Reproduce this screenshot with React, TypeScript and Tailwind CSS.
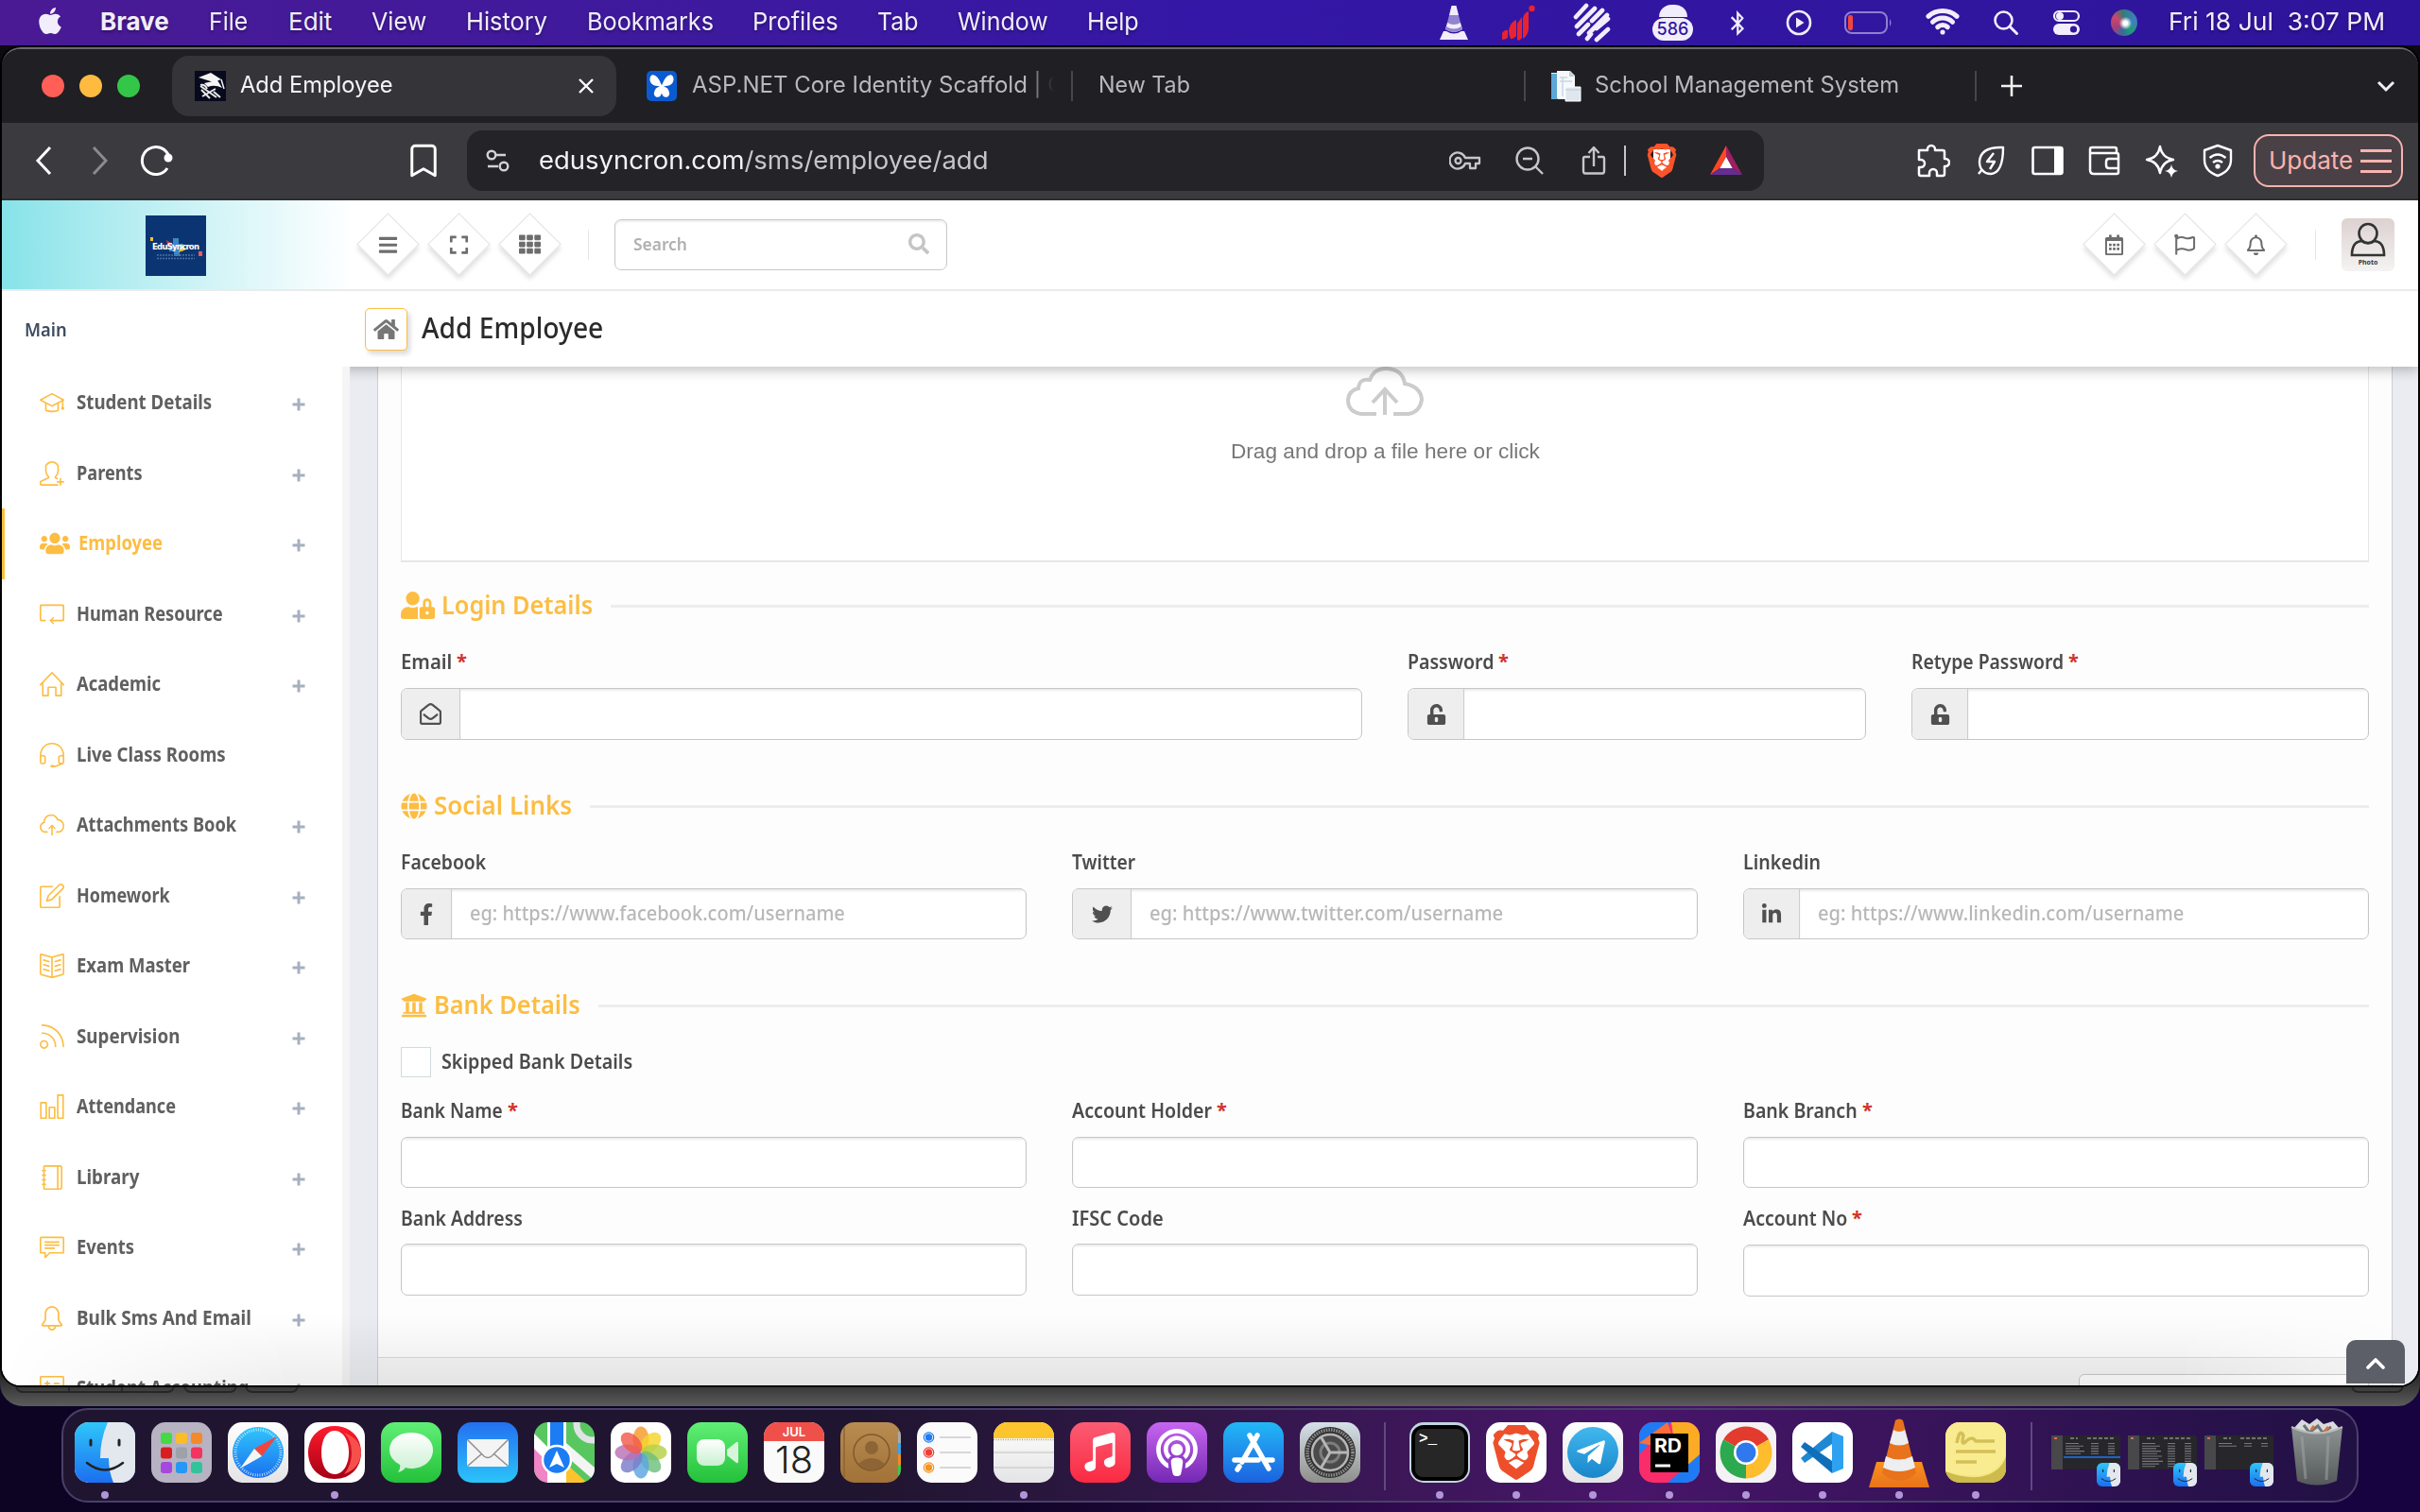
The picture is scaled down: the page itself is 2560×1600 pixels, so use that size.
import React, { useLayoutEffect, useRef, useState, ReactNode } from "react";
import {
  FaApple, FaBars, FaBluetoothB, FaExpand, FaFacebookF, FaGlobe, FaHome, FaLinkedinIn, FaPodcast,
  FaRegBell, FaRegCalendarAlt, FaRegEnvelopeOpen, FaRegFlag, FaSearch, FaTelegramPlane, FaTh,
  FaTwitter, FaUniversity, FaUnlockAlt, FaUserLock, FaUsers,
} from "react-icons/fa";
import {
  SlGraduation, SlUserFollow, SlLoop, SlHome, SlEarphonesAlt, SlCloudUpload, SlNote, SlBookOpen,
  SlFeed, SlChart, SlNotebook, SlSpeech, SlBell, SlCalculator,
} from "react-icons/sl";
import { SiBrave } from "react-icons/si";
import { IoMusicalNotes } from "react-icons/io5";
import { Bookmark, Wifi } from "lucide-react";

/* One line of text, condensed or widened to a given width. */
function Fit({ w, children, className = "" }: { w: number; children: ReactNode; className?: string }) {
  const ref = useRef<HTMLSpanElement>(null);
  const [k, setK] = useState(1);
  useLayoutEffect(() => {
    if (ref.current) setK(w / ref.current.offsetWidth);
  }, [w]);
  return (
    <span className={"block shrink-0 " + className} style={{ width: w }}>
      <span ref={ref} className="inline-block origin-left whitespace-pre" style={{ transform: `scaleX(${k})` }}>
        {children}
      </span>
    </span>
  );
}

/* ---------- macOS menu bar ---------- */

function MenuBar() {
  return (
    <div className="flex h-[48px] shrink-0 items-center bg-linear-to-r from-[#4a1a94] via-[#3417a6] to-[#2e149a] font-['Inter'] text-[26px] leading-[46px] text-[#f1edfb] [text-shadow:0_2px_3px_rgba(0,0,0,.35)]">
      <FaApple className="ml-[37px] h-[32px] w-[32px] -translate-y-[2px]" />
      <Fit w={73} className="ml-[37px] -translate-y-px font-bold">Brave</Fit>
      <Fit w={41} className="ml-[42px] -translate-y-px">File</Fit>
      <Fit w={46} className="ml-[43px] -translate-y-px">Edit</Fit>
      <Fit w={58} className="ml-[42px] -translate-y-px">View</Fit>
      <Fit w={86} className="ml-[42px] -translate-y-px">History</Fit>
      <Fit w={134} className="ml-[42px] -translate-y-px">Bookmarks</Fit>
      <Fit w={91} className="ml-[41px] -translate-y-px">Profiles</Fit>
      <Fit w={43} className="ml-[41px] -translate-y-px">Tab</Fit>
      <Fit w={96} className="ml-[42px] -translate-y-px">Window</Fit>
      <Fit w={55} className="ml-[41px] -translate-y-px">Help</Fit>
      <svg className="ml-auto" width="34" height="38" viewBox="0 0 34 38">
        <path d="M14.5 1h5l2.5 10h-10z M10 19h14l2 7q-9 6-18 0z M6 28h3q8 5 16 0h3l4 9H2z" fill="#f1edfb" />
        <path d="M12 11h10l2 8q-7 4-14 0z M8 26l1-3q8 5 16 0l1 3q-9 6-18 0z" fill="#9484cf" />
      </svg>
      <svg className="ml-[33px]" width="36" height="38" viewBox="0 0 36 38">
        <g fill="#e8232f">
          <path d="M1 30q3-4 6-3v8q-3 2-6 2zM8 27q2-9 8-11v17q-3 4-6 3-2-4-2-9zM17 20l5-7v22q-3 4-5 2zM23 15q1-7 6-8v19q-1 7-6 10z" />
          <circle cx="32.500" cy="4" r="3.200" />
        </g>
      </svg>
      <svg className="ml-[39px]" width="42" height="42" viewBox="0 0 42 42">
        <g stroke="#f1edfb" strokeWidth="4.600" strokeLinecap="round">
          <path d="M4 15L15 3M5 25L24 6M7 33L17 23M21 19L32 8M18 32L37 13M16 38L20 33M26 27L38 17M26 39L38 28" />
        </g>
      </svg>
      <span className="ml-[43px] flex h-[38px] w-[43px] shrink-0 flex-col items-center">
        <span className="h-[13px] w-[30px] rounded-t-full bg-[#f1edfb]" />
        <span className="mt-px flex h-[24px] w-[43px] items-center justify-center rounded-full bg-[#f1edfb] text-[18px] font-medium leading-none text-[#33169f] [text-shadow:none]">586</span>
      </span>
      <FaBluetoothB className="ml-[37px] h-[27px] w-[20px]" />
      <svg className="ml-[41px]" width="28" height="28" viewBox="0 0 28 28">
        <circle cx="14" cy="14" r="12" fill="none" stroke="#f1edfb" strokeWidth="2.6" />
        <path d="M11 8.5v11l8.5-5.5z" fill="#f1edfb" />
      </svg>
      <svg className="ml-[33px]" width="54" height="26" viewBox="0 0 54 26">
        <rect x="2" y="2" width="44" height="22" rx="7" fill="none" stroke="#8f7fd0" strokeWidth="2" />
        <rect x="5" y="5" width="5" height="16" rx="2" fill="#f2453d" />
        <path d="M49 9q3 4 0 8z" fill="#8f7fd0" />
      </svg>
      <Wifi className="ml-[33px] h-[36px] w-[36px] -translate-y-[2px]" strokeWidth={3.4} />
      <svg className="ml-[35px]" width="28" height="28" viewBox="0 0 28 28">
        <circle cx="11.5" cy="11.5" r="9" fill="none" stroke="#f1edfb" strokeWidth="2.6" />
        <path d="M18 18l7.5 7.5" stroke="#f1edfb" strokeWidth="3" strokeLinecap="round" />
      </svg>
      <svg className="ml-[35px]" width="30" height="28" viewBox="0 0 30 28">
        <rect x="2" y="2" width="26" height="10" rx="5" fill="none" stroke="#f1edfb" strokeWidth="2.2" />
        <circle cx="8" cy="7" r="4" fill="#f1edfb" />
        <rect x="1" y="15" width="28" height="12" rx="6" fill="#f1edfb" />
        <circle cx="22.500" cy="21" r="3.6" fill="#30169e" />
      </svg>
      <span className="ml-[32px] h-[28px] w-[28px] shrink-0 rounded-full bg-[radial-gradient(circle_at_55%_52%,#fff_0_10%,#ffffff00_32%),conic-gradient(#2f7f86,#3f7fc0_80deg,#1f9c74_140deg,#3a6a9a_190deg,#a2407a_240deg,#c8476c_300deg,#2f7f6b)]" />
      <Fit w={229} className="ml-[33px] mr-[37px] -translate-y-px">Fri 18 Jul  3:07 PM</Fit>
    </div>
  );
}

/* ---------- browser chrome ---------- */

function TabStrip() {
  return (
    <div className="flex h-[78px] shrink-0 items-center bg-[#201f24] font-['Inter'] text-[24px] leading-[32px] text-[#b9b9bc]">
      <span className="ml-[42px] h-[24px] w-[24px] rounded-full bg-[#ff5f57]" />
      <span className="ml-[16px] h-[24px] w-[24px] rounded-full bg-[#febb40]" />
      <span className="ml-[16px] h-[24px] w-[24px] rounded-full bg-[#34c648]" />
      <div className="ml-[34px] flex h-[64px] w-[470px] shrink-0 items-center rounded-[18px] bg-[#353439] text-[#f5f5f5]">
        <svg className="ml-[24px]" width="33" height="32" viewBox="0 0 33 32">
          <rect width="33" height="32" fill="#070a1c" />
          <path d="M4 7l13-5 11 7-8 3zM10 13l14-3 5 8q-8-4-15-1z" fill="#f4f4f4" />
          <path d="M28 9l3 10" stroke="#f4f4f4" strokeWidth="1.500" />
          <path d="M6 16l17 12M8 27l14-8M7 20l9 9M20 22l7 6M6 15q5-1 7 4" stroke="#e8e8e8" strokeWidth="2" fill="none" />
        </svg>
        <Fit w={162} className="ml-[15px] -translate-y-[1px]">Add Employee</Fit>
        <svg className="ml-auto mr-[24px]" width="16" height="16" viewBox="0 0 16 16">
          <path d="M1 1l14 14M15 1L1 15" stroke="#fff" strokeWidth="2.4" />
        </svg>
      </div>
      <svg className="ml-[32px] shrink-0" width="32" height="32" viewBox="0 0 32 32">
        <rect width="32" height="32" rx="5" fill="#0b5bd0" />
        <path d="M15 15Q11 4 6 5q-3 2-1 7 2 4 10 3zM17 15Q21 4 26 5q3 2 1 7-2 4-10 3zM15.500 16l-5 3q-4 6 0 8 5 1 5.500-8zM16.500 16l5 3q4 6 0 8-5 1-5.500-8z" fill="#fff" stroke="#fff" strokeWidth="1.500" />
      </svg>
      <div className="ml-[16px] w-[383px] shrink-0 overflow-hidden [mask-image:linear-gradient(to_right,#000_92%,transparent_100%)]">
        <Fit w={394} className="-translate-y-[1px]">ASP.NET Core Identity Scaffold | C</Fit>
      </div>
      <span className="ml-[18px] h-[32px] w-[2px] bg-[#47464b]" />
      <Fit w={97} className="ml-[27px] -translate-y-[1px]">New Tab</Fit>
      <span className="ml-[353px] h-[32px] w-[2px] bg-[#47464b]" />
      <svg className="ml-[25px] shrink-0" width="34" height="34" viewBox="0 0 34 34">
        <path d="M2 3h22v28H2z" fill="#e9f2f8" />
        <path d="M2 4h7v27H2z" fill="#5ba7d6" />
        <path d="M8 1h14l5 5v24H8z" fill="#f6f8fa" />
        <path d="M21 1l6 6h-6z" fill="#c3ced8" />
        <path d="M11 8h8M11 12h13M14 8v20" stroke="#c9d7e4" strokeWidth="1.500" />
        <path d="M17 18h16v15H17z" fill="#dfe6ee" stroke="#fff" />
        <path d="M17 21h16" stroke="#b9cbdc" />
      </svg>
      <Fit w={322} className="ml-[14px] -translate-y-[1px]">School Management System</Fit>
      <span className="ml-[80px] h-[32px] w-[2px] bg-[#47464b]" />
      <svg className="ml-[26px]" width="22" height="22" viewBox="0 0 22 22">
        <path d="M11 0v22M0 11h22" stroke="#f1f1f1" strokeWidth="2.6" />
      </svg>
      <svg className="ml-auto mr-[24px]" width="20" height="13" viewBox="0 0 20 13">
        <path d="M2 2l8 8 8-8" fill="none" stroke="#f1f1f1" strokeWidth="3" />
      </svg>
    </div>
  );
}

function Toolbar() {
  return (
    <div className="flex h-[82px] shrink-0 items-center border-b-2 border-[#2e2d31] bg-[#3b3a3f] font-['Inter'] text-[26px] leading-[36px]">
      <svg className="ml-[35px]" width="18" height="32" viewBox="0 0 18 32"><path d="M16 2L3 16l13 14" fill="none" stroke="#fff" strokeWidth="3" /></svg>
      <svg className="ml-[42px]" width="18" height="32" viewBox="0 0 18 32"><path d="M2 2l13 14L2 30" fill="none" stroke="#8b8a8f" strokeWidth="3" /></svg>
      <svg className="ml-[33px]" width="36" height="34" viewBox="0 0 36 34">
        <path d="M29 25A14.500 14.500 0 1 1 30.500 12" fill="none" stroke="#fff" strokeWidth="3" />
        <circle cx="30" cy="14" r="4.500" fill="#fff" />
      </svg>
      <Bookmark className="ml-[243px] h-[42px] w-[42px] shrink-0 text-white" strokeWidth={1.7} />
      <div className="ml-[25px] flex h-[64px] w-[1372px] shrink-0 items-center rounded-[16px] bg-[#242328] text-[#c6c6c9]">
        <svg className="ml-[20px]" width="26" height="24" viewBox="0 0 26 24">
          <g fill="none" stroke="#d2d2d5" strokeWidth="2.4"><circle cx="6" cy="6" r="4.300" /><path d="M10 6h11M2 18h11" /><circle cx="19" cy="18" r="4.300" /></g>
        </svg>
        <Fit w={475} className="ml-[30px]"><span className="text-[#f3f3f4]">edusyncron.com</span>/sms/employee/add</Fit>
        <svg className="ml-auto" width="34" height="22" viewBox="0 0 34 22">
          <g fill="none" stroke="#c6c6c9" strokeWidth="2.3" strokeLinejoin="round"><path d="M17 8A8.500 8.500 0 1 0 17 14h5v5h6v-5h4V8z" /><circle cx="9.500" cy="11" r="3" /></g>
        </svg>
        <svg className="ml-[35px]" width="32" height="30" viewBox="0 0 32 30">
          <g fill="none" stroke="#c6c6c9" strokeWidth="2.400"><circle cx="14" cy="13" r="11.500" /><path d="M9 13h10M22 21l8 8" /></g>
        </svg>
        <svg className="ml-[39px]" width="26" height="32" viewBox="0 0 26 32">
          <path d="M9 12H3.500q-1.500 0-1.500 2V27q0 2.500 2 2.500h18q2 0 2-2.500V14q0-2-1.500-2H17M13 22V2M7.500 8L13 2l5.500 6" fill="none" stroke="#c6c6c9" strokeWidth="2.400" strokeLinejoin="round" />
        </svg>
        <span className="ml-[19px] h-[32px] w-[2px] bg-[#c6c6c9]" />
        <span className="relative ml-[22px] flex h-[36px] w-[32px] items-center justify-center">
          <span className="absolute h-[24px] w-[18px] bg-white" />
          <SiBrave className="relative h-[36px] w-[36px] shrink-0 text-[#fb542b]" />
        </span>
        <svg className="ml-[34px] mr-[22px]" width="36" height="32" viewBox="0 0 38 32" preserveAspectRatio="none">
          <path d="M19 0L1 31l11-7 7-12z" fill="#ff4724" /><path d="M19 0l18 31-11-7-7-12z" fill="#9e1f63" /><path d="M1 31h36l-11-7H12z" fill="#662d91" /><path d="M19 12l7 12H12z" fill="#fff" />
        </svg>
      </div>
      <svg className="ml-[161px]" width="36" height="36" viewBox="0 0 36 36">
        <path d="M3.500 7H12V6a4 4 0 0 1 8 0v1h8q2 0 2 2v7h1a3.500 3.500 0 0 1 0 8h-1v8q0 2-2 2h-6v-3a4 4 0 0 0-8 0v3H5q-2 0-2-2v-7h2a4 4 0 0 0 0-8H3V7z" fill="none" stroke="#fff" strokeWidth="2.500" strokeLinejoin="round" />
      </svg>
      <svg className="ml-[27px]" width="32" height="32" viewBox="0 0 32 32">
        <g fill="none" stroke="#fff" strokeWidth="2.400" strokeLinejoin="round"><path d="M29 2Q5 1 4 17q0 6 3 9 3 4 9 4 13-1 13-28zM7 25l-4 5" /><path d="M19 8l-7 9h8l-5 8" /></g>
      </svg>
      <svg className="ml-[27px]" width="34" height="32" viewBox="0 0 34 32">
        <rect x="1.500" y="2" width="31" height="28" rx="2" fill="none" stroke="#fff" strokeWidth="2.600" /><path d="M24 2h9v28h-9z" fill="#fff" />
      </svg>
      <svg className="ml-[26px]" width="34" height="32" viewBox="0 0 34 32">
        <g fill="none" stroke="#fff" strokeWidth="2.500" strokeLinejoin="round"><path d="M30 8V4q0-2-2-2H4Q2 2 2 4v22q0 4 4 4h24q2 0 2-2V10q0-2-2-2H3M32 14H22q-3 0-3 3v4q0 3 3 3h10" /></g>
      </svg>
      <svg className="ml-[26px]" width="36" height="36" viewBox="0 0 36 36">
        <path d="M16 3q2 12 14 14-12 2-14 14Q14 19 2 17 14 15 16 3z" fill="none" stroke="#fff" strokeWidth="2.400" strokeLinejoin="round" />
        <path d="M28 22q1 6 7 7-6 1-7 7-1-6-7-7 6-1 7-7z" fill="#fff" />
      </svg>
      <svg className="ml-[24px]" width="34" height="36" viewBox="0 0 34 36">
        <g fill="none" stroke="#fff" strokeWidth="2.400" strokeLinejoin="round"><path d="M17 2l14 5v10q0 12-14 17Q3 29 3 17V7z" /><path d="M8.500 15q8.500-7 17 0M12 20q5-4 10 0" /></g>
        <circle cx="17" cy="24" r="2.600" fill="#fff" />
      </svg>
      <div className="ml-auto mr-[16px] flex h-[56px] w-[158px] items-center rounded-[16px] border-2 border-[#f9b3ae] bg-[#4a4147] text-[#f9b3ae]">
        <Fit w={89} className="ml-[14px]">Update</Fit>
        <span className="ml-[8px] flex flex-col gap-[8px]">
          <span className="h-[3px] w-[33px] bg-[#f9b3ae]" /><span className="h-[3px] w-[33px] bg-[#f9b3ae]" /><span className="h-[3px] w-[33px] bg-[#f9b3ae]" />
        </span>
      </div>
    </div>
  );
}

/* ---------- web page ---------- */

function Diamond({ children }: { children: ReactNode }) {
  return (
    <div className="flex h-[75px] w-[75px] shrink-0 items-center justify-center">
      <div className="flex h-[47px] w-[47px] rotate-45 items-center justify-center border border-[#e3e3e3] bg-white shadow-[3px_3px_5px_rgba(0,0,0,.12)]">
        <div className="-rotate-45 text-[20px] text-[#6d6d6d]">{children}</div>
      </div>
    </div>
  );
}

function PageHeader() {
  return (
    <div className="flex h-[96px] shrink-0 items-center border-b-2 border-[#ebebeb] bg-white">
      <div className="flex h-[94px] w-[370px] shrink-0 items-center bg-linear-to-r from-[#86e3e9] to-white pt-px">
        <div className="ml-[152px] flex h-[64px] w-[64px] items-center justify-center bg-[#0b3572]">
          <svg width="64" height="64" viewBox="0 0 64 64">
            <path d="M29 24h6v6h5v8h-4v5h-6v-5h-5v-8h4z" fill="#3d86c6" />
            <path d="M22 26l6 4-4 4z" fill="#e5333a" /><path d="M38 30l5 6-8 3z" fill="#f2c230" />
            <path d="M5 23h3v4H5z" fill="#f2c230" /><path d="M56 38h4v5h-4z" fill="#f0595b" />
            <text x="7" y="35.500" fontFamily="DejaVu Sans" fontWeight="700" fontSize="8.500" fill="#fff" textLength="50">EduSyncron</text>
            <path d="M12 42h40M12 45.500h40" stroke="#4d6f9f" strokeWidth="1.500" strokeDasharray="2 1" />
          </svg>
        </div>
      </div>
      <div className="ml-px flex pb-[2px]">
        <Diamond><FaBars className="h-[22px] w-[20px]" /></Diamond>
        <Diamond><FaExpand className="h-[22px] w-[20px]" /></Diamond>
        <Diamond><FaTh className="h-[23px] w-[23px]" /></Diamond>
      </div>
      <span className="ml-[24px] h-[32px] w-px bg-[#e6e6e6]" />
      <div className="ml-[27px] flex h-[54px] w-[352px] items-center justify-between rounded-[7px] border border-[#c8c8c8] pr-[18px] pl-[19px] text-[18px] leading-[26px] text-[#b0b0b0] shadow-[inset_0_2px_2px_rgba(0,0,0,.07)]">
        <Fit w={57} className="-translate-y-px font-semibold">Search</Fit>
        <FaSearch className="h-[22px] w-[22px] -translate-y-px text-[#c5c5c5]" />
      </div>
      <div className="ml-auto flex pb-[2px]">
        <Diamond><FaRegCalendarAlt className="h-[22px] w-[20px]" /></Diamond>
        <Diamond><FaRegFlag className="h-[22px] w-[23px]" /></Diamond>
        <Diamond><FaRegBell className="h-[22px] w-[20px]" /></Diamond>
      </div>
      <span className="ml-[25px] h-[32px] w-px bg-[#e6e6e6]" />
      <div className="ml-[27px] mr-[25px] flex h-[56px] w-[56px] flex-col items-center rounded-[6px] bg-linear-to-b from-[#dcd2d0] to-[#f4f3f3]">
        <svg width="40" height="40" viewBox="0 0 40 40" className="mt-[3px]">
          <g fill="none" stroke="#333" strokeWidth="2.600"><ellipse cx="20" cy="13" rx="9.500" ry="10" /><path d="M3 36q0-14 10-15 7 5 14 0 10 1 10 15z" /></g>
        </svg>
        <span className="text-[7px] font-bold leading-[8px] text-[#333]">Photo</span>
      </div>
    </div>
  );
}

const nav: { icon: ReactNode; label: string; w: number; plus?: boolean; active?: boolean }[] = [
  { icon: <SlGraduation />, label: "Student Details", w: 143, plus: true },
  { icon: <SlUserFollow />, label: "Parents", w: 70, plus: true },
  { icon: <FaUsers />, label: "Employee", w: 89, plus: true, active: true },
  { icon: <SlLoop />, label: "Human Resource", w: 155, plus: true },
  { icon: <SlHome />, label: "Academic", w: 89, plus: true },
  { icon: <SlEarphonesAlt />, label: "Live Class Rooms", w: 158 },
  { icon: <SlCloudUpload />, label: "Attachments Book", w: 169, plus: true },
  { icon: <SlNote />, label: "Homework", w: 99, plus: true },
  { icon: <SlBookOpen />, label: "Exam Master", w: 120, plus: true },
  { icon: <SlFeed />, label: "Supervision", w: 109, plus: true },
  { icon: <SlChart />, label: "Attendance", w: 105, plus: true },
  { icon: <SlNotebook />, label: "Library", w: 66, plus: true },
  { icon: <SlSpeech />, label: "Events", w: 61, plus: true },
  { icon: <SlBell />, label: "Bulk Sms And Email", w: 185, plus: true },
  { icon: <SlCalculator />, label: "Student Accounting", w: 182, plus: true },
];

function Sidebar() {
  return (
    <div className="flex w-[360px] shrink-0 flex-col bg-white">
      <div className="flex h-[81px] shrink-0 items-center pt-px pl-[24px]">
        <Fit w={45} className="text-[20px] font-semibold leading-[28px] text-[#3f4c5e]">Main</Fit>
      </div>
      {nav.map((n) => (
        <div key={n.label} className={"flex h-[74.500px] shrink-0 items-center border-l-[3px] text-[20.500px] font-bold leading-[28px] " + (n.active ? "border-[#fdbd42] text-[#fdbd42]" : "border-transparent text-[#606060]")}>
          <span className={"ml-[37px] shrink-0 text-[#fdbd42] " + (n.active ? "text-[32px]" : "text-[26px]")}>{n.icon}</span>
          <Fit w={n.w} className={n.active ? "ml-[9px] -translate-y-px" : "ml-[13px] -translate-y-px"}>{n.label}</Fit>
          {n.plus && (
            <svg className="ml-auto mr-[39px] translate-y-[2px]" width="14" height="14" viewBox="0 0 14 14">
              <path d="M7 0.500v13M0.500 7h13" stroke="#a6b0bf" strokeWidth="3" />
            </svg>
          )}
        </div>
      ))}
    </div>
  );
}

function Heading({ icon, w, children }: { icon: ReactNode; w: number; children: ReactNode }) {
  return (
    <div className="flex h-[43px] items-center text-[27px] leading-[36px] text-[#fdbd42]">
      <span className="-translate-y-px">{icon}</span>
      <Fit w={w} className="ml-[7px] -translate-y-[2px] font-semibold">{children}</Fit>
      <span className="ml-[19px] h-[3px] flex-1 bg-[#ededed]" />
    </div>
  );
}

function Field({ label, w, required, icon, addon = "", hint, hintW = 0, box = "h-[54px]", gap = "mt-[12px]", className = "" }: {
  label: string; w: number; required?: boolean; icon?: ReactNode; addon?: string; hint?: string; hintW?: number; box?: string; gap?: string; className?: string;
}) {
  return (
    <div className={className}>
      <div className="flex h-[30px] -translate-y-px items-center text-[21.500px] leading-[30px] text-[#4b4b4b]">
        <Fit w={w} className="font-semibold">{label}</Fit>
        {required && <span className="ml-[5px] text-[20px] font-bold text-[#d2322d]">*</span>}
      </div>
      <div className={"flex items-stretch overflow-hidden rounded-[7px] border border-[#c6c6c6] bg-white " + gap + " " + box}>
        {icon && <div className={"flex shrink-0 items-center justify-center border-r border-[#ccc] bg-[#eee] text-[#505050] " + addon}>{icon}</div>}
        <div className="flex flex-1 items-center pl-[19px] shadow-[inset_0_2px_2px_rgba(0,0,0,.08)]">
          {hint && <Fit w={hintW} className="-translate-y-px text-[21.500px] font-medium leading-[30px] text-[#b8b8b8]">{hint}</Fit>}
        </div>
      </div>
    </div>
  );
}

function Form() {
  return (
    <div className="flex min-w-0 flex-1 flex-col border-x border-[#cfcfd1] bg-[#fdfdfd] px-[24px]">
      <div className="flex h-[207px] shrink-0 flex-col items-center border-x border-b-2 border-[#e6e6e6] bg-white">
        <svg width="82" height="54" viewBox="0 0 82 54" className="-mt-px">
          <g fill="none" stroke="#ccc" strokeWidth="4"><path d="M32 51H16Q2 49 2 36 3 26 13 24 14 13 25 15 30 2 43 3 60 4 62 19 79 22 80 36 78 49 66 51H50" /><path d="M41 52V25M28 39l13-14 13 14" /></g>
        </svg>
        <Fit w={327} className="mt-[22px] font-['Liberation_Sans'] text-[22px] leading-[30px] text-[#777]">Drag and drop a file here or click</Fit>
      </div>

      <div className="mt-[25px]"><Heading icon={<FaUserLock className="h-[29px] w-[36px]" />} w={160}>Login Details</Heading></div>
      <div className="mt-[23px] flex">
        <Field className="w-[1017px]" box="h-[55px]" label="Email" w={54} required icon={<FaRegEnvelopeOpen className="h-[23px] w-[23px]" />} addon="w-[62px]" />
        <Field className="ml-[48px] w-[485px]" box="h-[55px]" label="Password" w={91} required icon={<FaUnlockAlt className="h-[22px] w-[21px]" />} addon="w-[59px]" />
        <Field className="ml-[48px] w-[484px]" box="h-[55px]" label="Retype Password" w={161} required icon={<FaUnlockAlt className="h-[22px] w-[21px]" />} addon="w-[59px]" />
      </div>

      <div className="mt-[49px]"><Heading icon={<FaGlobe className="h-[28px] w-[28px]" />} w={146}>Social Links</Heading></div>
      <div className="mt-[23px] grid grid-cols-3 gap-[48px]">
        <Field label="Facebook" w={90} icon={<FaFacebookF className="h-[23px] w-[22px]" />} addon="w-[53px]" hint="eg: https://www.facebook.com/username" hintW={397} />
        <Field label="Twitter" w={67} icon={<FaTwitter className="h-[23px] w-[22px]" />} addon="w-[62px]" hint="eg: https://www.twitter.com/username" hintW={374} />
        <Field label="Linkedin" w={82} icon={<FaLinkedinIn className="h-[23px] w-[22px]" />} addon="w-[59px]" hint="eg: https://www.linkedin.com/username" hintW={387} />
      </div>

      <div className="mt-[49px]"><Heading icon={<FaUniversity className="h-[28px] w-[28px]" />} w={155}>Bank Details</Heading></div>
      <div className="mt-[22px] flex h-[32px] items-center text-[21.500px] leading-[30px] text-[#4b4b4b]">
        <span className="h-[32px] w-[32px] border border-[#cfdbdd] bg-white" />
        <Fit w={202} className="ml-[11px] -translate-y-px font-semibold">Skipped Bank Details</Fit>
      </div>
      <div className="mt-[21px] grid grid-cols-3 gap-x-[48px] gap-y-[18px]">
        <Field label="Bank Name" w={108} required />
        <Field label="Account Holder" w={148} required />
        <Field label="Bank Branch" w={121} required />
        <Field label="Bank Address" w={129} box="h-[55px]" gap="mt-[11px]" />
        <Field label="IFSC Code" w={97} box="h-[55px]" gap="mt-[11px]" />
        <Field label="Account No" w={110} required box="h-[55px]" />
      </div>

      <div className="-mx-[24px] mt-[64px] flex h-[40px] shrink-0 justify-end border-t border-[#dcdcdc] bg-[#f6f6f6] pr-[24px]">
        <div className="mt-[17px] h-[40px] w-[307px] rounded-[6px] border border-[#c9c9c9] bg-white" />
      </div>
    </div>
  );
}

function Page() {
  return (
    <div className="relative flex h-[1254px] shrink-0 flex-col overflow-hidden bg-white font-['Noto_Sans',sans-serif]">
      <PageHeader />
      <div className="flex h-[1158px]">
        <Sidebar />
        <div className="flex flex-1 flex-col">
          <div className="relative z-10 flex h-[80px] shrink-0 items-center bg-white shadow-[0_4px_12px_rgba(0,0,0,.24)] [clip-path:inset(0_0_-20px_8px)]">
            <div className="ml-[24px] flex h-[45px] w-[45px] items-center justify-center rounded-[5px] border border-[#fdbd42] bg-white shadow-[3px_4px_5px_rgba(0,0,0,.14)]">
              <FaHome className="h-[27px] w-[27px] text-[#777]" />
            </div>
            <Fit w={192} className="ml-[15px] -translate-y-[2px] text-[31px] font-medium leading-[40px] text-[#2b2b2b]">Add Employee</Fit>
          </div>
          <div className="flex h-[1078px] overflow-hidden">
            <div className="w-[8px] shrink-0 bg-[#f5f5f6]" />
            <div className="w-[29px] shrink-0 bg-[#ebecf1]" />
            <Form />
            <div className="w-[27px] shrink-0 bg-[#ebecf1]" />
          </div>
        </div>
      </div>
      <div className="absolute inset-x-0 bottom-0 h-[76px] bg-linear-to-b from-transparent to-black/7 [mask-image:linear-gradient(to_right,transparent,#000_12%,#000_90%,transparent)]" />
      <div className="absolute right-[14px] bottom-[2px] flex h-[46px] w-[62px] items-center justify-center rounded-t-[10px] bg-[#5c5f67]">
        <svg width="20" height="13" viewBox="0 0 20 13" className="mt-[2px]"><path d="M2 11l8-8 8 8" fill="none" stroke="#fff" strokeWidth="3.600" strokeLinecap="round" strokeLinejoin="round" /></svg>
      </div>
    </div>
  );
}

/* ---------- Dock ---------- */

function Defs() {
  const g = (id: string, a: string, b: string) => (
    <linearGradient id={id} x1="0" y1="0" x2="0" y2="1"><stop offset="0" stopColor={a} /><stop offset="1" stopColor={b} /></linearGradient>
  );
  return (
    <svg className="absolute h-0 w-0">
      <defs>
        {g("blue", "#2fc6fa", "#1b6ff0")}{g("green", "#60ef76", "#24c13a")}{g("mail", "#2470f0", "#2bc4fa")}
        {g("white", "#ffffff", "#e4e4e6")}{g("red", "#fb5c74", "#fa2a42")}{g("purple", "#c766f0", "#7428b4")}
        {g("store", "#22b8f6", "#1c62e0")}{g("gear", "#d5e0e8", "#8f8f8b")}{g("brown", "#b88c52", "#a27238")}
        {g("tg", "#41b8ee", "#1a86cb")}{g("yellow", "#fdf098", "#f2e37c")}{g("trash", "#8d9393", "#55595a")}
        {g("opera", "#ff1b2d", "#a70014")}{g("puff", "#ffffff", "#c9f0d0")}{g("cone", "#fb9120", "#e8731c")}
        <clipPath id="tile"><rect width="64" height="64" rx="15" /></clipPath>
      </defs>
    </svg>
  );
}

function Tile({ fill, children, dot }: { fill: string; children?: ReactNode; dot?: boolean }) {
  return (
    <div className="flex w-[64px] shrink-0 flex-col items-center">
      <svg width="64" height="64" viewBox="0 0 64 64" className="overflow-visible">
        <g clipPath="url(#tile)"><rect width="64" height="64" fill={fill} />{children}</g>
      </svg>
      {dot && <span className="mt-[9px] h-[8px] w-[8px] rounded-full bg-[#b295d8]" />}
    </div>
  );
}

function FinderFace() {
  return (
    <g>
      <rect width="64" height="64" fill="url(#blue)" />
      <path d="M35 0q-8 18-8 38h9q0 14 5 26h23V0z" fill="#e3e8ef" />
      <path d="M17 19v5M47 19v5" stroke="#222" strokeWidth="3" strokeLinecap="round" />
      <path d="M13 43q19 15 38 0" fill="none" stroke="#222" strokeWidth="2.500" strokeLinecap="round" />
    </g>
  );
}

const petals = ["#f79a2c", "#f4d52a", "#b4d146", "#6fbf7d", "#5aa5e0", "#7a7bc8", "#b872b4", "#f25a4a"];
const pad = ["#45d944", "#fbbc2a", "#f4892b", "#d91d20", "#9ca2a8", "#f3345e", "#a548dd", "#2597f4", "#33c39b"];

function Thumb({ rows, mark }: { rows: number; mark?: boolean }) {
  return (
    <svg width="74" height="56" viewBox="0 0 74 56" className="shrink-0">
      <rect width="73" height="36" rx="2" fill="#27262a" /><rect width="12" height="36" fill="#48474a" />
      <path d="M3 3h3" stroke="#d9704a" strokeWidth="2" /><path d="M20 3h8M38 3h30" stroke="#8b8b8e" strokeWidth="1.500" strokeDasharray="4 2" />
      {Array.from({ length: rows }, (_, i) => (
        <path key={i} d={`M15 ${8.500 + i * 2.700}h${14 + ((i * 5) % 9)}M42 ${8.500 + i * 2.700}h8M60 ${8.500 + i * 2.700}h7`} stroke="#77787c" strokeWidth="1.100" />
      ))}
      {mark && <path d="M13 23h60" stroke="#1f63c8" strokeWidth="2" />}
      <svg x="48" y="29" width="25" height="25" viewBox="0 0 64 64"><g clipPath="url(#tile)"><FinderFace /></g></svg>
    </svg>
  );
}

function Dock() {
  return (
    <div className="ml-[65px] flex h-[100px] w-[2430px] items-start rounded-[28px] border-2 border-[#49406a] bg-linear-to-r from-[#201530] from-35% via-[#48156a] via-68% to-[#211044] pt-[13px] pl-[12px]">
      <Defs />
      <div className="flex gap-[17px]">
        <Tile fill="#fff" dot><FinderFace /></Tile>
        <Tile fill="#b7b3c2">{pad.map((c, i) => <rect key={i} x={10 + (i % 3) * 16} y={11 + Math.floor(i / 3) * 15.500} width="12" height="12" rx="3" fill={c} />)}</Tile>
        <Tile fill="url(#white)">
          <circle cx="32" cy="32" r="27" fill="url(#blue)" /><circle cx="32" cy="32" r="24" fill="none" stroke="#d5ecff" strokeWidth="3" strokeDasharray=".8 1.700" />
          <path d="M52 15L36 36l-8-8z" fill="#f2453d" /><path d="M13 49l15-21 8 8z" fill="#f5f5f5" />
        </Tile>
        <Tile fill="#fff" dot>
          <path fillRule="evenodd" d="M32 4c17 0 28 12 28 28S49 60 32 60 4 48 4 32 15 4 32 4zm0 5c-9 0-14 10-14 23s5 23 14 23 15-10 15-23S41 9 32 9z" fill="url(#opera)" />
          <path d="M42 11q17 6 18 21-1 17-18 23 8-10 8-23T42 11z" fill="#f5504c" />
        </Tile>
        <Tile fill="url(#green)"><path d="M32 11c14 0 23 8 23 18.500S46 49 32 49q-3 0-6-1-3 4-8 5 3-4 2-8Q9 39 9 29.500C9 19 18 11 32 11z" fill="url(#puff)" /></Tile>
        <Tile fill="url(#mail)"><rect x="10" y="18" width="44" height="29" rx="3" fill="#f4f4f4" /><path d="M11 19l17 17q4 3 8 0l17-17M11 46l15-13M53 46L38 33" fill="none" stroke="#8f8f8f" strokeWidth="1.500" /></Tile>
        <Tile fill="#58c75f">
          <path d="M0 20l44 44H0z" fill="#ef85c4" /><path d="M0 12l14 14v16L0 28z" fill="#fff" /><path d="M34 22l30 26v14L34 36z" fill="#f4f4f4" /><path d="M34 64V44l22 20z" fill="#fbc42e" />
          <path d="M14 0h20v64H14z" fill="#fff" /><path d="M17 0h14v34H17z" fill="#1c7cf2" /><circle cx="62" cy="2" r="17" fill="none" stroke="#dfe3e6" strokeWidth="7" />
          <circle cx="24" cy="40" r="15" fill="#1c7cf2" stroke="#fff" strokeWidth="2.500" /><path d="M24 30l8 18-8-4-8 4z" fill="#fff" />
        </Tile>
        <Tile fill="#fff">{petals.map((c, i) => <ellipse key={i} cx="32" cy="18" rx="8.500" ry="13.500" fill={c} opacity=".82" transform={`rotate(${i * 45} 32 32)`} />)}</Tile>
        <Tile fill="url(#green)"><rect x="10" y="18" width="30" height="28" rx="8" fill="url(#puff)" /><path d="M42 29l10-8q2-1 2 2v18q0 3-2 2l-10-8z" fill="#d8f5dc" /></Tile>
        <Tile fill="#fafafa">
          <rect width="64" height="20" fill="#f0504a" />
          <text x="32" y="15" textAnchor="middle" fontFamily="Inter" fontWeight="600" fontSize="13" fill="#fff">JUL</text>
          <text x="32" y="54" textAnchor="middle" fontFamily="Inter" fontWeight="300" fontSize="39" fill="#222" textLength="40" lengthAdjust="spacingAndGlyphs">18</text>
        </Tile>
        <Tile fill="url(#brown)"><path d="M4 0v64" stroke="#8d6433" strokeWidth="1.500" /><circle cx="33" cy="32" r="19" fill="none" stroke="#80582b" strokeWidth="1.500" /><circle cx="33" cy="27" r="7" fill="#8d6434" /><path d="M19 44q14-12 28 0-14 14-28 0z" fill="#8d6434" /><path d="M61 10h3v12h-3z" fill="#aaa" /><path d="M61 22h3v12h-3z" fill="#3aa4ec" /><path d="M61 34h3v11h-3z" fill="#f38b20" /><path d="M61 45h3v11h-3z" fill="#43c74e" /></Tile>
        <Tile fill="#fbfbfb">
          {["#1e7cf2", "#ee3e36", "#f7941d"].map((c, i) => <g key={c}><circle cx="12.500" cy={16 + i * 16} r="3.700" fill={c} /><circle cx="12.500" cy={16 + i * 16} r="5.200" fill="none" stroke={c} strokeWidth="1.200" /><path d={`M24 ${16 + i * 16}h33`} stroke="#b6b6b6" strokeWidth="1.200" /></g>)}
        </Tile>
        <Tile fill="url(#white)" dot><rect width="64" height="17" fill="#fdc52d" /><path d="M0 18.500h64" stroke="#a79f86" strokeWidth="1.500" strokeDasharray="1 1.500" /><path d="M0 32h64M0 48h64" stroke="#cfcfcf" strokeWidth="1.500" /></Tile>
        <Tile fill="url(#red)"><IoMusicalNotes x="8" y="8" size={47} color="#fff" /></Tile>
        <Tile fill="url(#purple)"><FaPodcast x="7" y="7" size={50} color="#fff" /></Tile>
        <Tile fill="url(#store)"><g stroke="#fff" strokeWidth="5.500" strokeLinecap="round"><path d="M36 14L20 42M28 14l20 35M12 40h25M46 40h6M17 47l-2 3" /></g></Tile>
        <Tile fill="url(#gear)">
          <circle cx="32" cy="32" r="27" fill="#333" /><circle cx="32" cy="32" r="24" fill="none" stroke="#8f8f8f" strokeWidth="3.500" strokeDasharray="1.500 1.200" />
          <circle cx="32" cy="32" r="19" fill="#4b4b4b" stroke="#b6b6b6" strokeWidth="2.500" /><circle cx="32" cy="32" r="10" fill="none" stroke="#7d7d7d" strokeWidth="3" /><path d="M32 32h20M32 32L22 15M32 32L22 49" stroke="#b6b6b6" strokeWidth="3" />
        </Tile>
      </div>
      <span className="ml-[25px] h-[72px] w-[2px] bg-[#5d4b80]" />
      <div className="ml-[25px] flex gap-[17px]">
        <Tile fill="#c2d5e0" dot><rect x="2" y="3" width="60" height="59" rx="13" fill="#000" /><rect x="6" y="7" width="52" height="51" rx="8" fill="#262626" /><text x="10" y="22" fontFamily="Liberation Mono" fontWeight="700" fontSize="16" fill="#fff">&gt;_</text></Tile>
        <Tile fill="#fff" dot><SiBrave x="3" y="3" size={58} color="#ee4f2b" /></Tile>
        <Tile fill="url(#white)" dot><circle cx="32" cy="32" r="27" fill="url(#tg)" /><FaTelegramPlane x="13" y="15" size={34} color="#fff" /></Tile>
        <Tile fill="#fb2c6a" dot>
          <path d="M0 0h34L0 34z" fill="#1f7bf4" /><path d="M34 0h30v44H40z" fill="#fdab25" /><path d="M30 64l34-30v30z" fill="#1f7bf4" /><path d="M0 22L30 0l10 30z" fill="#fb6d3a" />
          <rect x="12" y="12" width="40" height="41" fill="#000" /><text x="16" y="32" fontFamily="Inter" fontWeight="700" fontSize="20" fill="#fff" textLength="29" lengthAdjust="spacingAndGlyphs">RD</text><path d="M17 46h16" stroke="#fff" strokeWidth="3" />
        </Tile>
        <Tile fill="#f4f2f5" dot>
          <path d="M32 32L8.200 18.300A27.500 27.500 0 0 1 55.800 18.300z" fill="#e33b2e" /><path d="M32 32L8.200 18.300A27.500 27.500 0 0 0 32 59.500z" fill="#2da94f" /><path d="M32 32l23.800-13.700A27.500 27.500 0 0 1 32 59.500z" fill="#fdbd2c" />
          <path d="M32 18.500h23.900l-3-5H24z" fill="#e33b2e" /><circle cx="32" cy="32" r="13" fill="#fff" /><circle cx="32" cy="32" r="10.500" fill="#2f78ee" />
        </Tile>
        <Tile fill="#fff" dot><path d="M42 10v13L13 43l-4-5z" fill="#1e88d2" /><path d="M42 54V41L13 21l-4 5z" fill="#0f6fb8" /><path d="M42 10l12 5v34l-12 5z" fill="#2ea2f0" /></Tile>
        <div className="flex w-[64px] shrink-0 flex-col items-center">
          <svg width="64" height="64" viewBox="0 0 64 64" className="overflow-visible">
            <path d="M8 42h48l8 27H0z" fill="url(#cone)" /><path d="M28-2q4-3 8 0l14 56q-18 16-36 0z" fill="#e8731c" />
            <path d="M26 8q6 4 12 0l4 14q-10 5-20 0zM18 36q14 7 28 0l3 12q-17 8-34 0z" fill="#eceef0" />
          </svg>
          <span className="mt-[9px] h-[8px] w-[8px] rounded-full bg-[#b295d8]" />
        </div>
        <Tile fill="url(#yellow)" dot><path d="M0 52q26 10 44 4 16-6 20-20v28H0z" fill="#cdbb4c" /><path d="M0 52q30 8 44 2 16-6 20-24V0H0z" fill="#f9ec90" /><path d="M12 22q3-16 7-8-3 12 3 6 6-6 10 0h20M11 31h42M11 42h22" fill="none" stroke="#d4c058" strokeWidth="3.500" /></Tile>
      </div>
      <span className="ml-[26px] h-[72px] w-[2px] bg-[#5d4b80]" />
      <div className="mt-[14px] ml-[20px] flex gap-[7px]"><Thumb rows={5} mark /><Thumb rows={10} /><Thumb rows={2} /></div>
      <svg className="-mt-[5px] ml-[17px]" width="56" height="72" viewBox="0 0 56 72">
        <path d="M3 12L12 2l8 5 8-6 7 6 10-3 8 9-4 8H6z" fill="#d9dadb" /><path d="M14 8l6 8 9-7 5 7 9-6" stroke="#6d7478" strokeWidth="3" fill="none" /><path d="M22 13l3-4M36 15l4-5" stroke="#d5703c" strokeWidth="3" />
        <path d="M1 10q27 13 54 0l-6 57q-21 9-42 0z" fill="url(#trash)" /><path d="M1 10q27 13 54 0" fill="none" stroke="#b6baba" strokeWidth="2" /><path d="M12 20l4 45M40 20l-2 46" stroke="#a3a8a8" strokeWidth="3" opacity=".5" />
      </svg>
    </div>
  );
}

export default function App() {
  return (
    <div className="flex h-[1600px] w-[2560px] flex-col overflow-hidden bg-linear-to-r from-[#0d0424] from-40% via-[#4a0f6e] via-70% to-[#170340] to-88%">
      <MenuBar />
      <div className="h-[1440px] shrink-0 rounded-b-[24px] bg-linear-to-b from-[#0c0a10] from-[96%] via-[#383838] via-[98.5%] to-[#5c5c5c] px-[2px] pt-[2px]">
        <div className="relative z-10 flex h-[1416px] flex-col overflow-hidden rounded-[20px] border-t-2 border-[#6a696e] bg-[#201f24] shadow-[0_0_0_2px_#000]">
          <TabStrip />
          <Toolbar />
          <Page />
        </div>
        <div className="flex h-[8px] items-start pl-[14px]">
          <span className="h-[8px] w-[56px] rounded-bl-[8px] border-b-2 border-l-2 border-[#262626]" />
          <span className="h-[8px] w-[56px] border-b-2 border-l-2 border-[#262626]" />
          <span className="h-[8px] w-[57px] rounded-br-[8px] border-x-2 border-b-2 border-[#262626]" />
          <span className="ml-[9px] h-[8px] w-[57px] rounded-b-[8px] border-x-2 border-b-2 border-[#262626]" />
          <span className="ml-[8px] h-[8px] w-[57px] rounded-b-[8px] border-x-2 border-b-2 border-[#262626]" />
          <span className="mr-[15px] ml-auto h-[8px] w-[56px] rounded-b-[8px] border-x-2 border-b-2 border-[#262626]" />
        </div>
      </div>
      <div className="mt-[2px]"><Dock /></div>
    </div>
  );
}
